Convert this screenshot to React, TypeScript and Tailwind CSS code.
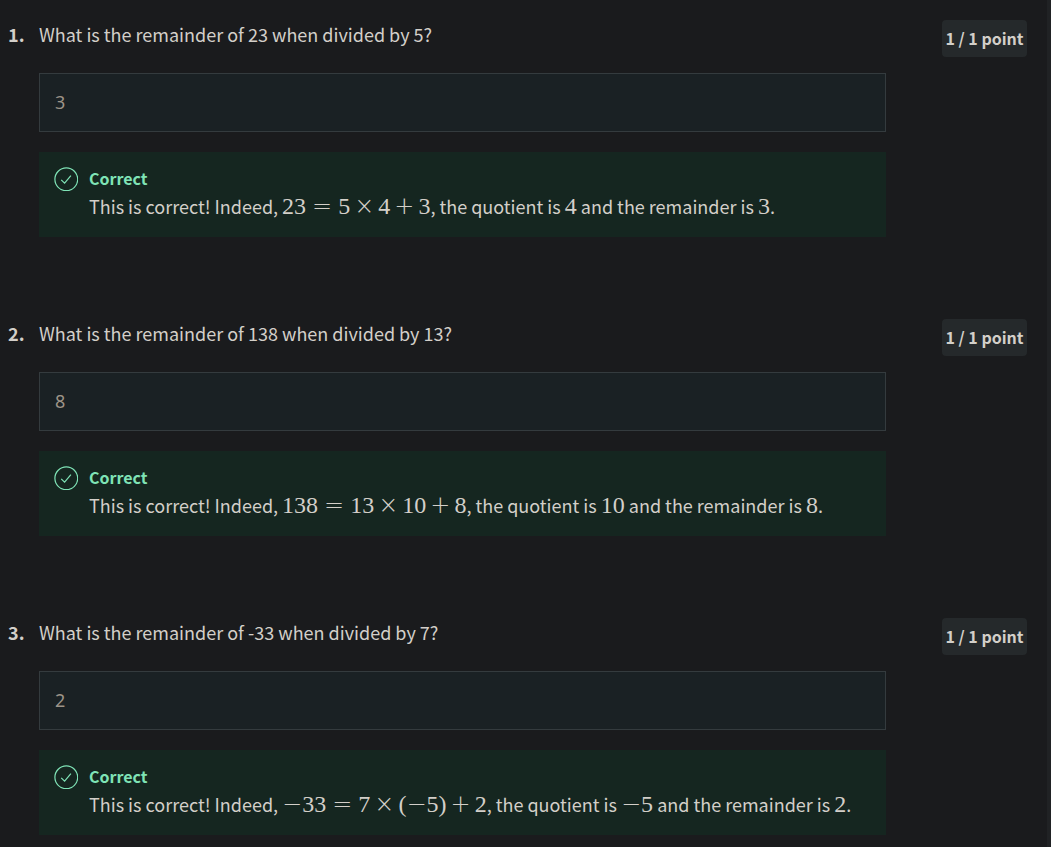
import { Fragment } from "react";

type Question = {
  prompt: string;
  answer: string;
  equation: string;
  quotient: string;
  remainder: string;
};

const questions: Question[] = [
  { prompt: "What is the remainder of 23 when divided by 5?", answer: "3", equation: "23 = 5 × 4 + 3", quotient: "4", remainder: "3" },
  { prompt: "What is the remainder of 138 when divided by 13?", answer: "8", equation: "138 = 13 × 10 + 8", quotient: "10", remainder: "8" },
  { prompt: "What is the remainder of -33 when divided by 7?", answer: "2", equation: "−33 = 7 × (−5) + 2", quotient: "−5", remainder: "2" },
];

const symbol = "font-['DejaVu_Sans',sans-serif] font-extralight";

function Operand({ value }: { value: string }) {
  return (
    <>
      {value.split("").map((ch, i) =>
        ch === "−" ? (
          <span key={i} className={symbol}>{ch}</span>
        ) : (
          <Fragment key={i}>{ch}</Fragment>
        )
      )}
    </>
  );
}

function Formula({ value }: { value: string }) {
  return (
    <span className="whitespace-nowrap font-['Liberation_Serif',serif] text-[24px] leading-none">
      {value.split(" ").map((token, i) => {
        if (token === "=") return <span key={i} className={`${symbol} mx-[6px]`}>{token}</span>;
        if (token === "×" || token === "+") return <span key={i} className={`${symbol} mx-1`}>{token}</span>;
        return <Operand key={i} value={token} />;
      })}
    </span>
  );
}

function CheckCircle() {
  return (
    <svg className="h-6 w-6 shrink-0" viewBox="0 0 24 24" fill="none" stroke="currentColor" strokeWidth="1.2" aria-hidden="true">
      <circle cx="12.3" cy="12.3" r="11.4" />
      <path d="M7.2 12.8l3.4 3.4 6.3-7.5" />
    </svg>
  );
}

function QuestionBlock({ question, index }: { question: Question; index: number }) {
  const id = `answer-${index + 1}`;
  return (
    <section className="flex items-start">
      <span className="w-[31px] shrink-0 text-[18px] font-bold leading-7">{index + 1}.</span>
      <div className="min-w-0 flex-1">
        <label htmlFor={id} className="block text-[18px] leading-7">{question.prompt}</label>
        <input
          id={id}
          readOnly
          value={question.answer}
          className="mt-[25px] block h-[59px] w-full border border-[#343b3e] bg-[#1a2124] px-[15px] pb-0.5 font-['Noto_Sans',sans-serif] text-[18px] text-[#9d9488] outline-none"
        />
        <div className="mt-5 flex gap-[11px] bg-[#152620] px-[15px] pb-[15px] pt-[15px]">
          <span className="text-[#7fe3b6]"><CheckCircle /></span>
          <div>
            <p className="text-[16px] font-bold leading-[22px] text-[#7fe3b6]">Correct</p>
            <p className="mt-0.5 text-[18px] leading-[31px]">
              This is correct! Indeed, <Formula value={question.equation} />, the quotient is{" "}
              <Formula value={question.quotient} /> and the remainder is <Formula value={question.remainder} />.
            </p>
          </div>
        </div>
      </div>
      <span className="ml-14 w-[85px] shrink-0 rounded bg-[#25292b] text-center text-[16px] font-bold leading-[37px]">
        1 / 1 point
      </span>
    </section>
  );
}

export default function App() {
  return (
    <main className="min-h-screen border-r-4 border-[#202224] bg-[#1a1b1d] font-['Noto_Sans_CJK_SC',sans-serif] text-[#d3cfc9]">
      <div className="flex flex-col gap-[82px] pb-3 pl-2 pr-5 pt-5">
        {questions.map((question, i) => (
          <QuestionBlock key={question.prompt} question={question} index={i} />
        ))}
      </div>
    </main>
  );
}
